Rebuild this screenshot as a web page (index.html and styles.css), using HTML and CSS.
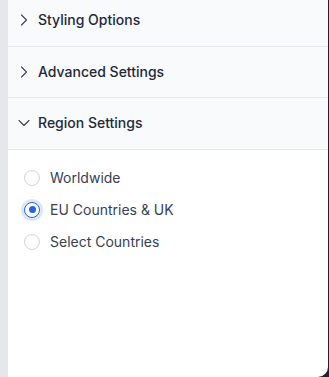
FILE: index.html
```html
<!DOCTYPE html>
<html>
<head>
<meta charset="utf-8">
<link rel="stylesheet" href="styles.css">
</head>
<body>
<div class="panel">
  <div class="strip"></div>
  <div class="content">
    <div class="acc-header">
      <svg class="chev" viewBox="0 0 24 24" fill="none" stroke="currentColor" stroke-width="1.6" stroke-linecap="round" stroke-linejoin="round"><path d="m8.25 4.5 7.5 7.5-7.5 7.5"/></svg>
      <span class="acc-title">Styling Options</span>
    </div>
    <div class="acc-header">
      <svg class="chev" viewBox="0 0 24 24" fill="none" stroke="currentColor" stroke-width="1.6" stroke-linecap="round" stroke-linejoin="round"><path d="m8.25 4.5 7.5 7.5-7.5 7.5"/></svg>
      <span class="acc-title">Advanced Settings</span>
    </div>
    <div class="acc-header">
      <svg class="chev" viewBox="0 0 24 24" fill="none" stroke="currentColor" stroke-width="1.6" stroke-linecap="round" stroke-linejoin="round"><path d="m19.5 8.25-7.5 7.5-7.5-7.5"/></svg>
      <span class="acc-title">Region Settings</span>
    </div>
    <div class="options">
      <label class="option"><span class="radio"></span><span class="opt-label">Worldwide</span></label>
      <label class="option"><span class="radio checked"></span><span class="opt-label">EU Countries &amp; UK</span></label>
      <label class="option"><span class="radio"></span><span class="opt-label">Select Countries</span></label>
    </div>
  </div>
</div>
</body>
</html>
```
FILE: styles.css
```css
* { box-sizing: border-box; }
html, body { margin: 0; padding: 0; }
body {
  background: #1c2230;
  font-family: Inter, "Liberation Sans", sans-serif;
  width: 329px;
  height: 377px;
  overflow: hidden;
}
.panel {
  width: 328px;
  height: 377px;
  display: flex;
  background: #ffffff;
  border-bottom-right-radius: 10px;
  overflow: hidden;
}
.strip {
  width: 8px;
  flex: none;
  background: #e5e7eb;
}
.content {
  flex: 1;
  margin-top: -5px;
}
.acc-header {
  height: 51.6px;
  display: flex;
  align-items: center;
  gap: 6px;
  padding-left: 8px;
  background: #f9fafb;
  border-bottom: 1px solid #e5e7eb;
}
.chev {
  width: 16px;
  height: 16px;
  color: #374151;
  flex: none;
}
.acc-title {
  font-size: 14px;
  font-weight: 500;
  color: #1f2937;
  line-height: 20px;
}
.options {
  padding: 12px 0 0 16px;
}
.option {
  height: 32px;
  display: flex;
  align-items: center;
  gap: 10px;
}
.radio {
  width: 16px;
  height: 16px;
  border-radius: 50%;
  border: 1px solid #d1d5db;
  background: #fff;
  flex: none;
  display: flex;
  align-items: center;
  justify-content: center;
}
.radio.checked {
  border: 1.5px solid #2563eb;
  box-shadow: 0 0 0 3px #dbe7fd;
}
.radio.checked::after {
  content: "";
  width: 7px;
  height: 7px;
  border-radius: 50%;
  background: #2563eb;
}
.opt-label {
  font-size: 14px;
  color: #374151;
  line-height: 20px;
}
```
